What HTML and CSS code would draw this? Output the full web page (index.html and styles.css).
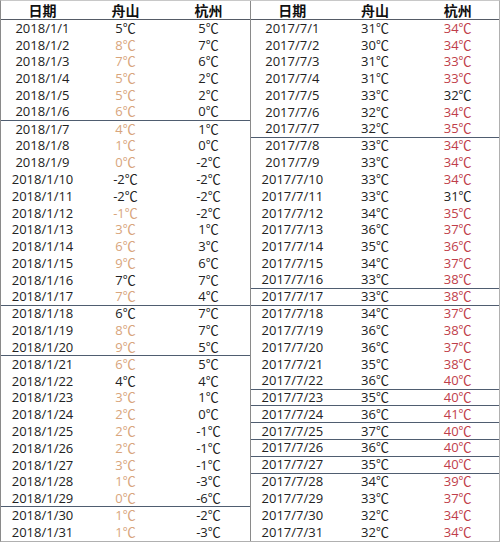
FILE: index.html
```html
<!DOCTYPE html>
<html lang="zh">
<head>
<meta charset="utf-8">
<link rel="stylesheet" href="styles.css">
</head>
<body>
<div class="sheet">
  <div class="tbl left">
    <div class="row head"><span>日期</span><span>舟山</span><span>杭州</span></div>
    <div class="row"><span>2018/1/1</span><span>5℃</span><span>5℃</span></div>
    <div class="row"><span>2018/1/2</span><span class="o">8℃</span><span>7℃</span></div>
    <div class="row"><span>2018/1/3</span><span class="o">7℃</span><span>6℃</span></div>
    <div class="row"><span>2018/1/4</span><span class="o">5℃</span><span>2℃</span></div>
    <div class="row"><span>2018/1/5</span><span class="o">5℃</span><span>2℃</span></div>
    <div class="row sep"><span>2018/1/6</span><span class="o">6℃</span><span>0℃</span></div>
    <div class="row"><span>2018/1/7</span><span class="o">4℃</span><span>1℃</span></div>
    <div class="row"><span>2018/1/8</span><span class="o">1℃</span><span>0℃</span></div>
    <div class="row"><span>2018/1/9</span><span class="o">0℃</span><span>-2℃</span></div>
    <div class="row"><span>2018/1/10</span><span>-2℃</span><span>-2℃</span></div>
    <div class="row"><span>2018/1/11</span><span>-2℃</span><span>-2℃</span></div>
    <div class="row"><span>2018/1/12</span><span class="o">-1℃</span><span>-2℃</span></div>
    <div class="row"><span>2018/1/13</span><span class="o">3℃</span><span>1℃</span></div>
    <div class="row"><span>2018/1/14</span><span class="o">6℃</span><span>3℃</span></div>
    <div class="row"><span>2018/1/15</span><span class="o">9℃</span><span>6℃</span></div>
    <div class="row"><span>2018/1/16</span><span>7℃</span><span>7℃</span></div>
    <div class="row sep"><span>2018/1/17</span><span class="o">7℃</span><span>4℃</span></div>
    <div class="row"><span>2018/1/18</span><span>6℃</span><span>7℃</span></div>
    <div class="row"><span>2018/1/19</span><span class="o">8℃</span><span>7℃</span></div>
    <div class="row sep"><span>2018/1/20</span><span class="o">9℃</span><span>5℃</span></div>
    <div class="row"><span>2018/1/21</span><span class="o">6℃</span><span>5℃</span></div>
    <div class="row"><span>2018/1/22</span><span>4℃</span><span>4℃</span></div>
    <div class="row"><span>2018/1/23</span><span class="o">3℃</span><span>1℃</span></div>
    <div class="row"><span>2018/1/24</span><span class="o">2℃</span><span>0℃</span></div>
    <div class="row"><span>2018/1/25</span><span class="o">2℃</span><span>-1℃</span></div>
    <div class="row"><span>2018/1/26</span><span class="o">2℃</span><span>-1℃</span></div>
    <div class="row"><span>2018/1/27</span><span class="o">3℃</span><span>-1℃</span></div>
    <div class="row"><span>2018/1/28</span><span class="o">1℃</span><span>-3℃</span></div>
    <div class="row sep"><span>2018/1/29</span><span class="o">0℃</span><span>-6℃</span></div>
    <div class="row"><span>2018/1/30</span><span class="o">1℃</span><span>-2℃</span></div>
    <div class="row last"><span>2018/1/31</span><span class="o">1℃</span><span>-3℃</span></div>
  </div>
  <div class="tbl right">
    <div class="row head"><span>日期</span><span>舟山</span><span>杭州</span></div>
    <div class="row"><span>2017/7/1</span><span>31℃</span><span class="r">34℃</span></div>
    <div class="row"><span>2017/7/2</span><span>30℃</span><span class="r">34℃</span></div>
    <div class="row"><span>2017/7/3</span><span>31℃</span><span class="r">33℃</span></div>
    <div class="row"><span>2017/7/4</span><span>31℃</span><span class="r">33℃</span></div>
    <div class="row"><span>2017/7/5</span><span>33℃</span><span>32℃</span></div>
    <div class="row"><span>2017/7/6</span><span>32℃</span><span class="r">34℃</span></div>
    <div class="row sep"><span>2017/7/7</span><span>32℃</span><span class="r">35℃</span></div>
    <div class="row"><span>2017/7/8</span><span>33℃</span><span class="r">34℃</span></div>
    <div class="row"><span>2017/7/9</span><span>33℃</span><span class="r">34℃</span></div>
    <div class="row"><span>2017/7/10</span><span>33℃</span><span class="r">34℃</span></div>
    <div class="row"><span>2017/7/11</span><span>33℃</span><span>31℃</span></div>
    <div class="row"><span>2017/7/12</span><span>34℃</span><span class="r">35℃</span></div>
    <div class="row"><span>2017/7/13</span><span>36℃</span><span class="r">37℃</span></div>
    <div class="row"><span>2017/7/14</span><span>35℃</span><span class="r">36℃</span></div>
    <div class="row"><span>2017/7/15</span><span>34℃</span><span class="r">37℃</span></div>
    <div class="row sep"><span>2017/7/16</span><span>33℃</span><span class="r">38℃</span></div>
    <div class="row sep"><span>2017/7/17</span><span>33℃</span><span class="r">38℃</span></div>
    <div class="row"><span>2017/7/18</span><span>34℃</span><span class="r">37℃</span></div>
    <div class="row"><span>2017/7/19</span><span>36℃</span><span class="r">38℃</span></div>
    <div class="row"><span>2017/7/20</span><span>36℃</span><span class="r">37℃</span></div>
    <div class="row"><span>2017/7/21</span><span>35℃</span><span class="r">38℃</span></div>
    <div class="row sep"><span>2017/7/22</span><span>36℃</span><span class="r">40℃</span></div>
    <div class="row sep"><span>2017/7/23</span><span>35℃</span><span class="r">40℃</span></div>
    <div class="row sep"><span>2017/7/24</span><span>36℃</span><span class="r">41℃</span></div>
    <div class="row sep"><span>2017/7/25</span><span>37℃</span><span class="r">40℃</span></div>
    <div class="row sep"><span>2017/7/26</span><span>36℃</span><span class="r">40℃</span></div>
    <div class="row sep"><span>2017/7/27</span><span>35℃</span><span class="r">40℃</span></div>
    <div class="row"><span>2017/7/28</span><span>34℃</span><span class="r">39℃</span></div>
    <div class="row"><span>2017/7/29</span><span>33℃</span><span class="r">37℃</span></div>
    <div class="row"><span>2017/7/30</span><span>32℃</span><span class="r">34℃</span></div>
    <div class="row last"><span>2017/7/31</span><span>32℃</span><span class="r">34℃</span></div>
  </div>
</div>
</body>
</html>
```
FILE: styles.css
```css
html, body {
  margin: 0;
  padding: 0;
  background: #ffffff;
}

.sheet {
  display: flex;
  width: 498px;
  border-top: 1px solid #c8c8c8;
  border-left: 1px solid #8a8a8a;
  border-right: 1px solid #b0b0b0;
  border-bottom: 1px solid #b0b0b0;
  font-family: "Open Sans", "Noto Sans CJK SC", sans-serif;
  font-size: 13px;
  color: #222222;
}

.tbl {
  display: flex;
  flex-direction: column;
  flex: 0 0 249px;
}

.tbl.left {
  border-right: 1px solid #8a8a8a;
}

.tbl.right {
  flex: 1 1 auto;
}

.row {
  display: grid;
  grid-template-columns: 1fr 1fr 1fr;
  align-items: center;
  height: 16.8px;
  box-sizing: border-box;
  line-height: 1;
  text-align: center;
}

.row.head {
  height: 19px;
  border-bottom: 1px solid #555b66;
  font-family: "Noto Sans CJK SC", sans-serif;
  font-weight: bold;
  font-size: 14px;
  color: #111111;
}

.row.sep {
  border-bottom: 1px solid #4f5d70;
}

.o {
  color: #d8a57c;
}

.r {
  color: #bf3e4a;
}
```
